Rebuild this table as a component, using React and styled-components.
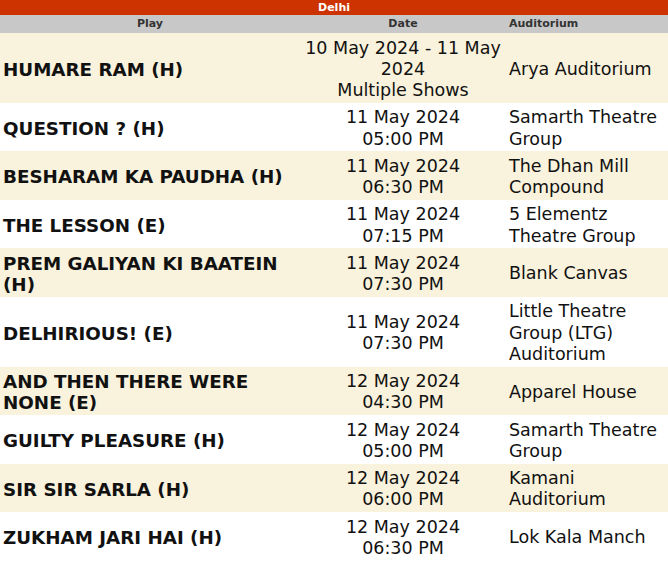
import React from "react";
import styled, { createGlobalStyle } from "styled-components";

const GlobalStyle = createGlobalStyle`
  html, body {
    margin: 0;
    padding: 0;
    background: #fff;
  }
  body {
    font-family: "DejaVu Sans", Verdana, sans-serif;
  }
`;

const Table = styled.table`
  width: 668px;
  border-collapse: collapse;
  border-spacing: 0;
  table-layout: fixed;
  font-family: "DejaVu Sans", Verdana, sans-serif;
`;

const CityRow = styled.tr`
  background-color: #cc3300;
`;

const CityCell = styled.th`
  height: 15px;
  padding: 0;
  color: #fff;
  font-size: 11px;
  font-weight: bold;
  line-height: 15px;
  text-align: center;
`;

const HeadRow = styled.tr`
  background-color: #c8c8c8;
`;

const HeadCell = styled.th`
  height: 18px;
  padding: 0 3px;
  color: #333;
  font-size: 11px;
  font-weight: bold;
  line-height: 18px;
  text-align: ${(p) => p.$align || "center"};
`;

const Row = styled.tr`
  background-color: ${(p) => (p.$shade ? "#f9f2dc" : "#fff")};
`;

const Cell = styled.td`
  padding: 4.5px 3px 1.5px;
  color: #111;
  font-size: ${(p) => (p.$bold ? "18.3px" : "17.5px")};
  line-height: 21.25px;
  vertical-align: middle;
  text-align: ${(p) => p.$align || "left"};
  font-weight: ${(p) => (p.$bold ? "bold" : "normal")};
`;

const shows = [
  { play: "HUMARE RAM (H)", date: "10 May 2024 - 11 May 2024", time: "Multiple Shows", venue: "Arya Auditorium" },
  { play: "QUESTION ? (H)", date: "11 May 2024", time: "05:00 PM", venue: "Samarth Theatre Group" },
  { play: "BESHARAM KA PAUDHA (H)", date: "11 May 2024", time: "06:30 PM", venue: "The Dhan Mill Compound" },
  { play: "THE LESSON (E)", date: "11 May 2024", time: "07:15 PM", venue: "5 Elementz Theatre Group" },
  { play: "PREM GALIYAN KI BAATEIN (H)", date: "11 May 2024", time: "07:30 PM", venue: "Blank Canvas" },
  { play: "DELHIRIOUS! (E)", date: "11 May 2024", time: "07:30 PM", venue: "Little Theatre Group (LTG) Auditorium" },
  { play: "AND THEN THERE WERE NONE (E)", date: "12 May 2024", time: "04:30 PM", venue: "Apparel House" },
  { play: "GUILTY PLEASURE (H)", date: "12 May 2024", time: "05:00 PM", venue: "Samarth Theatre Group" },
  { play: "SIR SIR SARLA (H)", date: "12 May 2024", time: "06:00 PM", venue: "Kamani Auditorium" },
  { play: "ZUKHAM JARI HAI (H)", date: "12 May 2024", time: "06:30 PM", venue: "Lok Kala Manch" },
];

export default function App() {
  return (
    <>
      <GlobalStyle />
      <Table>
        <colgroup>
          <col style={{ width: 300 }} />
          <col style={{ width: 206 }} />
          <col style={{ width: 162 }} />
        </colgroup>
        <thead>
          <CityRow>
            <CityCell colSpan={3}>Delhi</CityCell>
          </CityRow>
          <HeadRow>
            <HeadCell>Play</HeadCell>
            <HeadCell>Date</HeadCell>
            <HeadCell $align="left">Auditorium</HeadCell>
          </HeadRow>
        </thead>
        <tbody>
          {shows.map((s, i) => (
            <Row key={s.play} $shade={i % 2 === 0}>
              <Cell $bold>{s.play}</Cell>
              <Cell $align="center">
                {s.date}
                <br />
                {s.time}
              </Cell>
              <Cell>{s.venue}</Cell>
            </Row>
          ))}
        </tbody>
      </Table>
    </>
  );
}
